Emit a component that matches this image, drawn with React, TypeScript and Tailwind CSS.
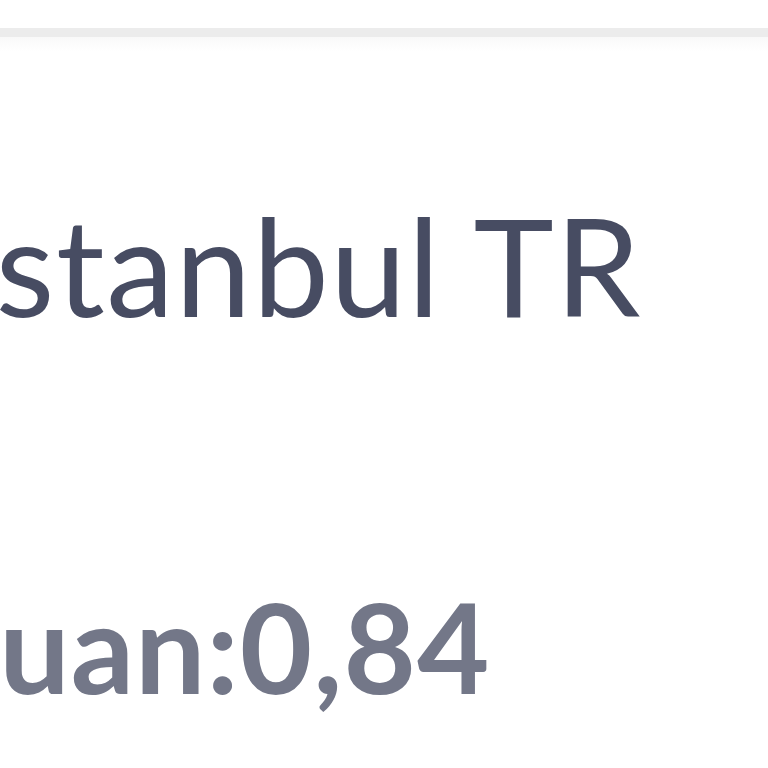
export default function App() {
  return (
    <div className="h-[768px] w-[768px] overflow-hidden bg-white" style={{ fontFamily: 'Lato, "Noto Sans", sans-serif' }}>
      <div className="h-[28px] bg-white" />
      <div className="h-[9px] bg-[#ececec]" />
      <div className="h-[14px] bg-gradient-to-b from-[#f9f9f9] to-white" />

      <div className="pt-[146px]">
        <p className="-ml-[42px] whitespace-nowrap text-[136px] leading-none font-normal tracking-[1.5px] text-[#474c62]">
          İstanbul TR
        </p>
      </div>

      <div className="pt-[251px]">
        <p className="-ml-[79px] whitespace-nowrap text-[125px] leading-none font-bold tracking-[1px] text-[#737788]">
          Puan:0,84
        </p>
      </div>
    </div>
  )
}
